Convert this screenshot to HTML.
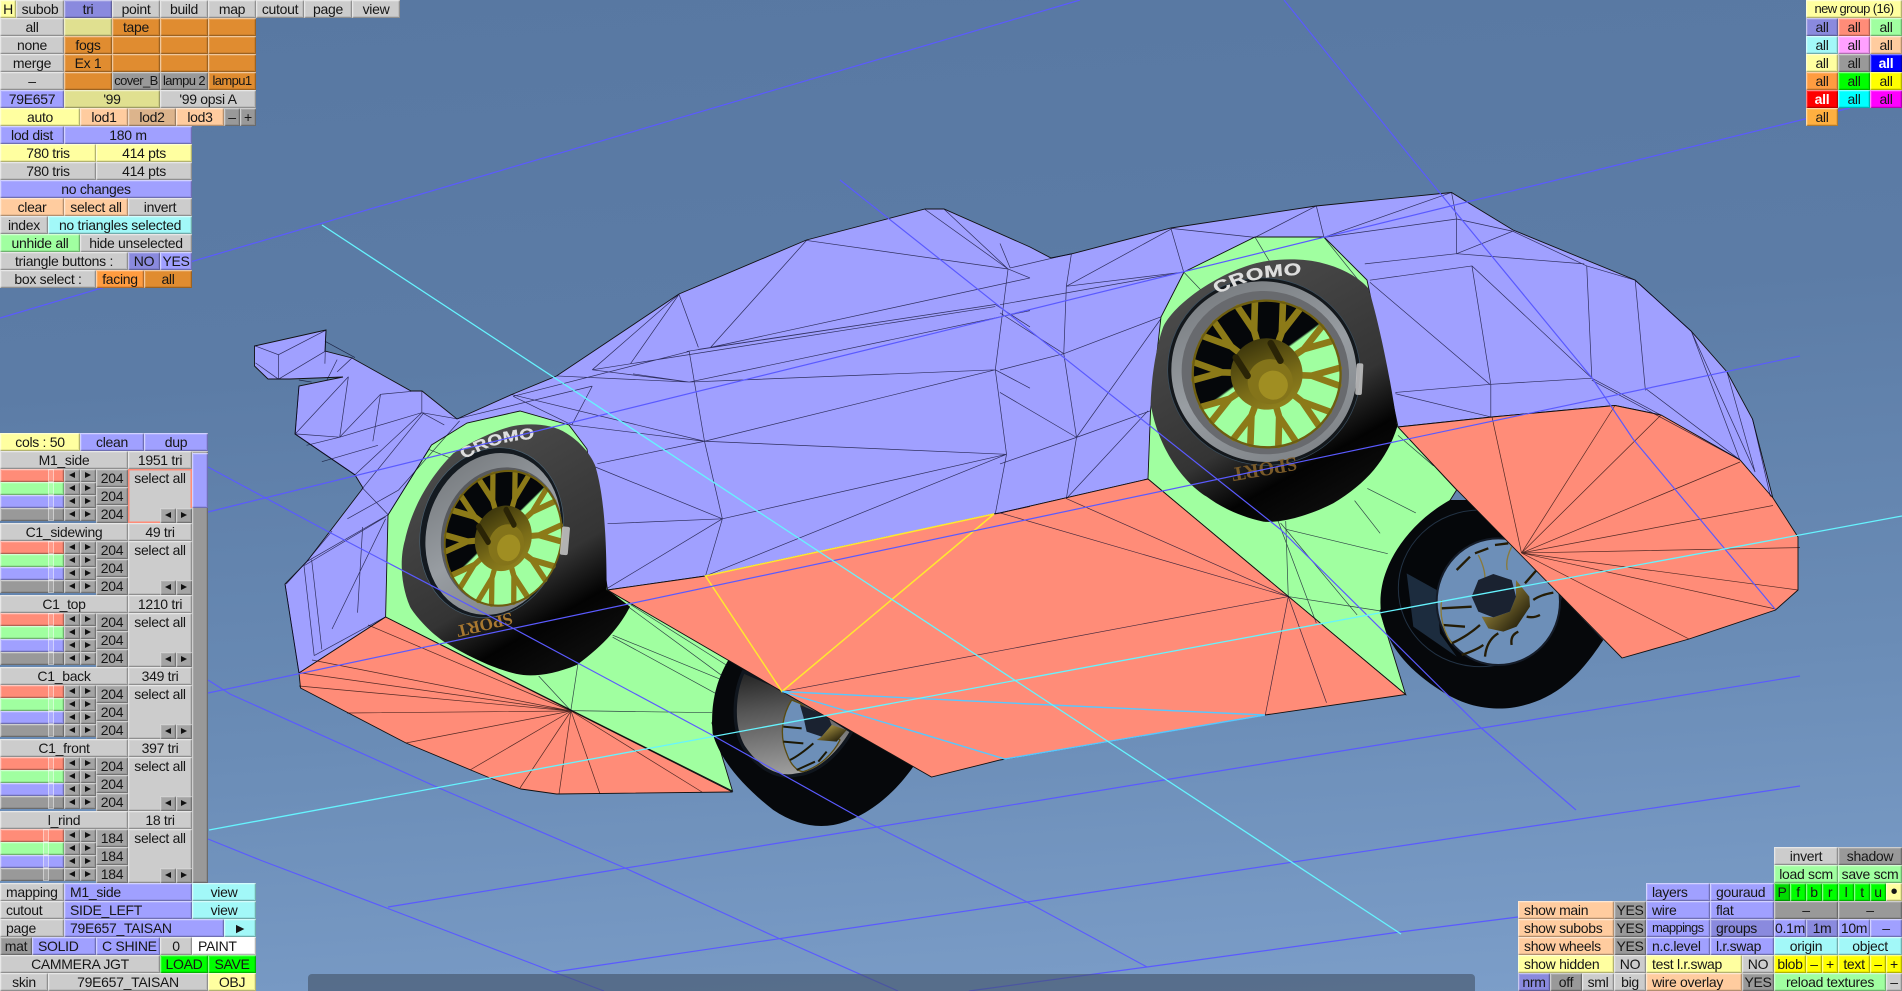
<!DOCTYPE html>
<html><head><meta charset="utf-8"><title>zmodeler</title>
<style>
html,body{margin:0;padding:0;width:1902px;height:991px;overflow:hidden;background:#6a8cb4}
#bg{position:absolute;left:0;top:0;width:1902px;height:991px;background:linear-gradient(176deg,#5878a2 0%,#5c7ca6 35%,#6a8cb6 68%,#7d9fca 100%)}
svg{position:absolute;left:0;top:0}
svg .w path,svg path.w{vector-effect:non-scaling-stroke}
#strip{position:absolute;left:308px;top:974px;width:1167px;height:17px;background:rgba(66,82,104,.62);border-radius:4px 4px 0 0}
#ui{position:absolute;left:0;top:0;width:1902px;height:991px;filter:blur(.3px);font:14px/18px "Liberation Sans",sans-serif;letter-spacing:-.3px;color:#161616}
#ui b,#ui i{position:absolute;display:block;box-sizing:border-box;height:18px;font-weight:normal;font-style:normal;text-align:center;white-space:nowrap;overflow:hidden;background:#ccc;box-shadow:inset 1px 1px 0 rgba(255,255,255,.45),inset -1px -1px 0 rgba(0,0,0,.24),inset 2px 2px 0 rgba(255,255,255,.14),inset -2px -2px 0 rgba(0,0,0,.08)}
#ui b.g{background:#ccc}#ui b.d{background:#999}#ui b.p{background:#a0a0ff}#ui b.P{background:#8a8ade}
#ui b.o{background:#e08c30}#ui b.O{background:#ff9c40}#ui b.y{background:#ffffa0}#ui b.Y{background:#e0e090}
#ui b.c{background:#ffcc9f}#ui b.C{background:#dcb48c}#ui b.n{background:#a2f8f8}#ui b.l{background:#a0ffa0}
#ui b.G{background:#00ff00}#ui b.GG{background:#00dc00}#ui b.YY{background:#ffff00}#ui b.W{background:#fff}
#ui b.B{background:#0000ff;color:#fff;font-weight:bold}#ui b.R{background:#ff0000;color:#fff;font-weight:bold}
#ui b.A{background:#00ffff}#ui b.M{background:#ff00ff}#ui b.K{background:#ffa0ff}#ui b.T{background:#ff8c78}#ui b.U{background:#ffb040}
#ui b.L{text-align:left;padding-left:6px}
#ui b.N{font-size:13px;letter-spacing:-.6px}
.bk{position:absolute;left:0;width:192px;height:72px}
.bk b.h1{left:0;top:0;width:128px}.bk b.h2{left:128px;top:0;width:64px}
#ui .bk i.s{left:0;width:64px;height:13px}
.bk i.s::after{content:"";position:absolute;left:48px;top:0;width:6px;height:13px;box-sizing:border-box;border:1px solid rgba(255,255,255,.45);background:rgba(255,255,255,.12)}
.bk.t i.s::after{left:43px}
#ui .bk i.s0{top:18px;background:#ff8c78}#ui .bk i.s1{top:31px;background:#a0ffa0}#ui .bk i.s2{top:44px;background:#a0a0ff}#ui .bk i.s3{top:57px;background:#999}
#ui .bk i.a{height:13px;width:16px;background:#a4a4a4}
.bk i.a::after{content:"";position:absolute;left:5px;top:3px;border:3.5px solid transparent;border-left:0;border-right:6px solid #111}
.bk i.e::after{border-right:0;border-left:6px solid #111}
.bk i.a.e{left:80px}.bk i.a.f{left:64px}
.bk i.r0{top:18px}.bk i.r1{top:31px}.bk i.r2{top:44px}.bk i.r3{top:57px}
#ui .bk b.n0,#ui .bk b.n1,#ui .bk b.n2{left:96px;width:32px;background:#a4a4a4}
.bk b.n0{top:18px}.bk b.n1{top:36px}.bk b.n2{top:54px}
#ui .bk b.sa{left:128px;top:18px;width:64px;height:54px;text-align:center}
#ui .bk i.x,#ui .bk i.z{top:57px;width:16px;height:15px;background:#a4a4a4}
.bk i.x{left:160px}.bk i.z{left:176px}
.bk i.x::after,.bk i.z::after{content:"";position:absolute;left:5px;top:4px;border:3.5px solid transparent}
.bk i.x::after{border-left:0;border-right:6px solid #111}.bk i.z::after{border-right:0;border-left:6px solid #111}
</style></head><body>
<div id="bg"></div>
<svg width="1902" height="991" viewBox="0 0 1902 991" xmlns="http://www.w3.org/2000/svg">
<defs>
<linearGradient id="tire" x1=".25" y1=".1" x2=".7" y2=".95"><stop offset="0" stop-color="#4a4a4a"/><stop offset=".6" stop-color="#343434"/><stop offset=".82" stop-color="#030303"/><stop offset="1" stop-color="#0c0c0c"/></linearGradient>
<linearGradient id="ring" x1=".1" y1=".1" x2=".9" y2=".9"><stop offset="0" stop-color="#787c80"/><stop offset=".5" stop-color="#989da2"/><stop offset="1" stop-color="#7e8286"/></linearGradient>
<linearGradient id="gap" x1=".15" y1=".25" x2=".75" y2=".65"><stop offset=".5" stop-color="#05070a"/><stop offset=".52" stop-color="#a0ffa0"/></linearGradient>
<linearGradient id="hub" x1="0" y1="0" x2="1" y2="1"><stop offset="0" stop-color="#2a2608"/><stop offset=".6" stop-color="#7a6c18"/><stop offset="1" stop-color="#9a8a20"/></linearGradient>
<linearGradient id="dish" x1=".3" y1="0" x2=".45" y2="1"><stop offset="0" stop-color="#262626"/><stop offset=".35" stop-color="#555"/><stop offset="1" stop-color="#a0a0a0"/></linearGradient>
<linearGradient id="au" x1="0" y1="0" x2="1" y2="1"><stop offset="0" stop-color="#c8b050"/><stop offset="1" stop-color="#0a0800"/></linearGradient>
<path id="c1" d="M0,0 Q90,-42 205,-8"/>
<path id="c2" d="M0,0 Q80,-36 185,-6"/>
<g id="rim">
<circle r="222" fill="url(#gap)"/>
<g fill="none" stroke="#8c7a18" stroke-width="20" stroke-linecap="round">
<path id="sp" d="M0,-60 L0,-135 L-26,-216 M0,-135 L26,-216"/>
<use href="#sp" transform="rotate(36)"/><use href="#sp" transform="rotate(72)"/><use href="#sp" transform="rotate(108)"/><use href="#sp" transform="rotate(144)"/><use href="#sp" transform="rotate(180)"/><use href="#sp" transform="rotate(216)"/><use href="#sp" transform="rotate(252)"/><use href="#sp" transform="rotate(288)"/><use href="#sp" transform="rotate(324)"/>
</g>
<circle r="222" fill="none" stroke="#6e5e10" stroke-width="7"/>
<circle r="108" fill="url(#hub)"/>
<circle cx="18" cy="18" r="68" fill="#84741a"/>
<circle cx="30" cy="25" r="44" fill="#a08e22"/>
<path d="M-20,-92 L25,-52 M-104,-15 L-52,25" stroke="#2a2406" stroke-width="20" stroke-linecap="round"/>
</g>
</defs>

<!-- body fills -->
<polygon fill="#a0a0ff" stroke="#111" stroke-width=".9" points="299,673 285,584 306.5,562 363,488 355,475 295,434 299,386 343,377 290,379 268,379 254.5,366 254.5,346 326,330 325,351 352,358 411,391 422,391 457,419 513,394 556.5,376 679,294 806.5,240 925,209 944,209 1030,247 1051,258 1071,254 1171,228 1316,206 1451.5,192.5 1513,230 1635,280 1691,331 1727,372 1752.5,419 1773,498.6 1740,460 1661,415 1615,405.5 1492,417 1398,427 1148,479 1000,513 994,514 705.5,576 607.5,590 385.6,617"/>
<polygon fill="#a0ffa0" stroke="#111" stroke-width=".9" points="385.6,617 388,515 431.5,445 467,423 520,411 569,425 587,449 607.5,590 732.5,662 712,723 732.5,791"/>
<polygon fill="#ff8c78" stroke="#111" stroke-width=".9" points="385.6,617 299,673 300.5,688 406,743 490,778 521,789 556.5,794 732.5,792"/>
<polygon fill="#a0ffa0" stroke="#111" stroke-width=".9" points="1148,479 1150.5,411 1161,317 1184,272 1255,237 1324,237 1367,280 1398,427 1456.6,490 1380,611 1405.6,694.5"/>

<!-- lower wheels -->
<g transform="translate(700,660) scale(.3333)">
<path d="M85,0 C50,60 30,130 38,220 C60,300 130,380 220,450 C280,490 340,505 400,495 C480,480 570,420 640,320 L300,100 L100,0Z" fill="#06080b"/>
<path d="M130,35 C100,100 95,200 130,260 C170,320 230,360 290,345 C350,340 410,290 455,215 L280,100Z" fill="url(#dish)" stroke="#10161e" stroke-width="10"/>
<path d="M275,120 C250,160 235,220 260,280 C270,310 290,335 310,335 C360,320 400,280 420,240 L300,130Z" fill="#6d8fb8" stroke="#5a4c12" stroke-width="4"/>
<path d="M300,135 L385,170 L395,195 L365,230 L320,215 L310,170Z" fill="#1a2230"/>
<path d="M395,195 L440,210 L410,245 L350,240 L365,230Z" fill="url(#au)"/>
<path d="M250,200 L305,205 M250,245 L310,250 M270,300 Q300,285 340,250 M290,330 L345,305 M355,305 L380,275" stroke="#1c1804" stroke-width="6" fill="none"/>
</g>
<g transform="translate(1370,500) scale(.3333)">
<path d="M240,0 L295,0 L700,420 C680,450 640,510 590,550 C520,610 430,630 370,625 C300,620 250,600 180,550 C110,500 60,440 40,370 C25,320 30,260 50,210 C80,130 150,50 240,0Z" fill="#06080b"/>
<ellipse cx="330" cy="265" rx="245" ry="235" fill="#05070a" stroke="#223244" stroke-width="3"/>
<path d="M110,220 L200,270 L210,400 L260,470 L130,380Z" fill="#1c2c3e"/>
<ellipse cx="385" cy="305" rx="185" ry="190" fill="#6d8fb8" stroke="#151c28" stroke-width="6"/>
<path d="M215,325 L305,320 M220,375 L285,380 M245,430 Q290,410 330,375 M275,465 Q320,450 340,435 M345,470 Q350,420 385,400 M425,435 Q420,405 445,395 M470,350 Q490,355 510,345 M490,300 Q510,285 550,278 M465,250 L500,210 M260,210 L300,170 M315,160 L355,145 M375,135 L415,130" stroke="#241c06" stroke-width="7" fill="none"/>
<path d="M215,300 Q205,370 245,430 M325,165 Q345,205 345,235 M425,140 Q405,180 412,210" stroke="#8a7a3a" stroke-width="4" fill="none"/>
<path d="M438,240 L478,290 L480,320 L440,380 L400,395 L355,385 L335,350 L370,352 L420,335 L438,290Z" fill="url(#au)"/>
<path d="M370,222 L425,240 L438,290 L420,335 L370,352 L325,335 L305,290 L325,240Z" fill="#1a2230"/>
</g>

<!-- big orange panels -->
<polygon fill="#ff8c78" stroke="#111" stroke-width=".9" points="607.5,590 705.5,576 994,514 1000,513 1148,479 1405.6,694.5 1265,715 1000,760 931.5,777 782,691.5"/>
<polygon fill="#ff8c78" stroke="#111" stroke-width=".9" points="1398,427 1492,417 1615,405.5 1661,415 1740,460 1773,498 1798,537 1798,590 1775.5,610 1689,639 1622,658 1457,490"/>

<!-- fans -->
<path fill="none" stroke="#1a0808" stroke-width=".7" stroke-opacity=".75" d="M571,711 L301,673 M571,711 L312,660 M571,711 L299,686 M571,711 L347,713 M571,711 L406,743 M571,711 L470,770 M571,711 L520,788 M571,711 L559,794 M571,711 L600,794 M571,711 L702,792 M571,711 L368,625
M1521.5,553 L1615,405.5 M1521.5,553 L1661,415 M1521.5,553 L1740,462 M1521.5,553 L1773,505.5 M1521.5,553 L1800,547.6 M1521.5,553 L1798,590 M1521.5,553 L1775.5,609 M1521.5,553 L1689,639 M1521.5,553 L1492,417"/>

<!-- wire z10 -->
<g class="w" transform="translate(230,180) scale(.5102,.4082)" fill="none" stroke="#0a0a28" stroke-width=".7" stroke-opacity=".75">
<path d="M48,406 L95,428 L188,368 M95,428 L95,488 M50,448 L95,488 M95,488 L186,420 M188,368 L186,450 M240,435 L210,470 M186,395 L245,435 M135,490 L160,495 M210,440 L190,490"/>
<path d="M135,505 L128,622 L215,630 L295,525 L355,518 M232,482 L215,630 M128,622 L232,482 M215,630 L376,570 L376,518 M376,570 L445,585 M128,622 L245,722 M215,630 L150,650 M290,650 L180,690 M376,570 L420,600 M376,570 L245,722 M295,525 L280,640 M380,570 L260,755"/>
<path d="M108,990 L135,1208 M145,945 L165,1165 M160,930 L180,1150 M305,1070 L165,1165 M310,820 L150,935 M305,825 L145,945 M305,830 L200,1100 M260,755 L310,820 M390,660 L310,820 M260,850 L250,1060 M110,990 L150,935 M200,860 L150,935 M330,760 L230,830 M450,590 L330,760 M390,660 L450,690"/>
<path d="M880,280 L918,410 M880,280 L785,450 M1130,148 L942,410 M1130,148 L1525,218 M1362,72 L1525,218 M1400,72 L1525,218 M1525,218 L1568,240 M942,410 L1568,240 M918,415 L1500,305 M710,465 L1500,310 M895,420 L1500,305 M710,465 L900,495 M790,475 L900,495 M900,495 L1500,465 M900,495 L1568,320 M900,420 L930,640 M930,640 L965,830 M965,830 L932,970 M965,830 L740,1000 M965,830 L1522,672 M930,640 L1522,672 M930,640 L1500,465 M670,600 L930,640 M710,505 L670,600 M555,530 L670,600 M550,525 L930,640 M720,695 L930,640 M710,700 L965,830 M740,842 L965,830 M1500,465 L1522,672 M1522,672 L1500,818 M1525,218 L1500,465 M1522,672 L932,970 M1500,305 L1568,360 M1500,465 L1568,510 M640,480 L900,495 M555,530 L900,420 M880,280 L710,465 M445,585 L710,505 M1500,818 L1568,800"/>
<path d="M668,1300 L605,1215 M668,1300 L682,1185 M668,1300 L945,1305 M750,1115 L965,1225 M750,1120 L955,1260 M785,1040 L975,1190 M780,1045 L965,1215"/>
</g>
<!-- wire z11 -->
<g class="w" transform="translate(1000,170) scale(.5102,.4082)" fill="none" stroke="#0a0a28" stroke-width=".7" stroke-opacity=".75">
<path d="M335,143 L360,250 M335,143 L500,165 M500,165 L620,88 M620,88 L635,165 M885,55 L635,165 M885,55 L895,120 L895,205 M635,165 L895,120 M715,230 L895,205 M895,205 L1145,230 M925,235 L1160,510 M925,235 L962,525 M725,270 L925,235 M725,275 L960,525 M1150,235 L1160,510 M1150,235 L1245,270 M1245,270 L1265,540 M1245,270 L1355,395 M1355,395 L1450,710 M1160,510 L1295,600 M962,525 L1160,510 M962,525 L962,605 M775,545 L962,525 M775,548 L962,605 M1160,515 L1450,710 M1265,535 L1450,710 M1425,495 L1480,740 M1475,610 L1510,800 M1355,395 L1480,740 M895,120 L1005,150 L895,205 M1005,150 L1150,235"/>
<path d="M140,205 L130,285 M130,285 L360,250 M130,285 L125,450 M125,450 L150,655 M150,655 L130,805 M0,330 L360,250 M140,205 L20,240 M0,180 L20,240 M125,450 L315,360 M125,450 L0,350 M125,450 L0,490 M150,655 L315,365 M150,655 L0,545 M150,655 L295,590 M0,720 L150,655 M130,805 L290,590 M130,285 L335,145 M500,165 L560,290 M635,165 L725,305 M360,250 L425,335"/>
<path d="M0,840 L565,1045 M130,805 L565,1045 M-427,1278 L565,1045 M565,1045 L520,1335 M565,1045 L640,1305 M560,860 L565,1045 M560,880 L760,940 M720,780 L815,840 M695,810 L745,890 M550,865 L700,1090 M565,1045 L745,1080 M780,650 L850,725 M545,860 L620,1110"/>
</g>
<!-- selected edges -->
<path fill="none" stroke="#ffe830" stroke-width="1.5" d="M705.5,576 L994,514 L782,691.5 Z"/>
<path fill="none" stroke="#58c8ff" stroke-width="1.4" d="M782,691.5 L1030,704 L1265,715 M782,691.5 L1005,759 L1265,715"/>

<!-- upper rear wheel -->
<g transform="translate(380,410) scale(.3333)">
<path d="M420,45 C470,40 520,45 560,70 C600,95 630,130 645,165 C665,230 680,330 680,540 C700,550 730,575 750,590 C725,640 680,700 590,765 C530,790 470,800 430,795 C380,790 290,755 200,700 C150,670 100,610 90,590 C60,520 60,440 75,390 C90,320 130,220 220,130 C290,85 370,50 420,45Z" fill="url(#tire)"/>
<ellipse cx="335" cy="368" rx="212" ry="258" transform="rotate(16 335 368)" fill="#141a20" stroke="#4a6070" stroke-width="2"/>
<ellipse cx="340" cy="372" rx="200" ry="246" transform="rotate(16 340 372)" fill="url(#ring)"/>
<ellipse cx="365" cy="380" rx="180" ry="210" transform="rotate(16 365 380)" fill="#585a5e"/>
<g transform="translate(370,385) rotate(16) scale(.78,.92)"><use href="#rim"/></g>
<rect x="543" y="350" width="24" height="85" rx="6" fill="#c8c8c8" transform="rotate(5 555 390)" opacity=".85"/>
<g transform="translate(255,148) rotate(-14) scale(1.25,1)"><text font-family="Liberation Sans" font-weight="bold" font-size="46" fill="#dedede" stroke="#dedede" stroke-width="1"><textPath href="#c2">CROMO</textPath></text></g>
<text text-anchor="middle" transform="translate(310,628) rotate(166)" font-family="Liberation Serif" font-weight="bold" font-size="52" fill="#a87830">SPORT</text>
</g>
<!-- upper front wheel -->
<g transform="translate(1120,230) scale(.3333)">
<path d="M430,95 C480,85 560,85 610,100 C670,115 720,145 745,175 C770,250 810,430 832,590 C800,690 740,760 640,820 C560,860 480,880 430,875 C360,860 300,830 260,800 C180,750 110,640 92,520 C95,420 115,330 130,290 C170,210 320,115 430,95Z" fill="url(#tire)"/>
<ellipse cx="432" cy="425" rx="290" ry="280" transform="rotate(20 432 425)" fill="#14181c" stroke="#3c5060" stroke-width="2"/>
<ellipse cx="432" cy="425" rx="279" ry="270" transform="rotate(20 432 425)" fill="url(#ring)"/>
<ellipse cx="436" cy="428" rx="252" ry="244" transform="rotate(20 436 428)" fill="#686a6e"/>
<g transform="translate(440,432) rotate(20) scale(1,.99)"><use href="#rim"/></g>
<rect x="708" y="400" width="20" height="95" rx="6" fill="#c8c8c8" transform="rotate(3 718 445)" opacity=".85"/>
<g transform="translate(295,192) rotate(-10) scale(1.35,1)"><text font-family="Liberation Sans" font-weight="bold" font-size="50" fill="#dedede" stroke="#dedede" stroke-width="1"><textPath href="#c1">CROMO</textPath></text></g>
<text text-anchor="middle" transform="translate(430,698) rotate(170)" font-family="Liberation Serif" font-weight="bold" font-size="60" fill="#7a5a28">SPORT</text>
</g>

<!-- grid -->
<g fill="none" stroke="#5a5aff" stroke-width="1.2">
<path d="M0,318 L1080,0"/>
<path d="M208,512 L1597,170 L1850,108"/>
<path d="M208,693 L1030,519 L1800,356"/>
<path d="M388,907 L1164,780 L1800,676"/>
<path d="M554,972 L1027,902 L1560,822 L1800,786"/>
<path d="M969,991 L1147,967 L1400,932 L1518,917"/>
<path d="M840,180 L1280,529 L1480,727 L1576,810"/>
<path d="M1284,0 L1421,170 L1592,378 L1633,439 L1775,609"/>
<path d="M208,467 L327,531 L510.6,627 L712,735 L869,823 L1027,902 L1147,967"/>
<path d="M208,680 L230,694 L439,788 L625,868 L778,938 L898,991"/>
<path d="M208,839 L260,860 L384,907 L554,972 L604,991"/>
</g>
<g fill="none" stroke="#66f4ff" stroke-width="1.3">
<path d="M322,225 L1401,934"/>
<path d="M209,830 L1902,516"/>
</g>
</svg>
<div id="strip"></div>

<div id="ui">
<!-- top bar -->
<b class="y" style="left:0;top:0;width:16px">H</b><b class="g" style="left:16px;top:0;width:48px">subob</b><b class="P" style="left:64px;top:0;width:48px">tri</b><b class="g" style="left:112px;top:0;width:48px">point</b><b class="g" style="left:160px;top:0;width:48px">build</b><b class="g" style="left:208px;top:0;width:48px">map</b><b class="g" style="left:256px;top:0;width:48px">cutout</b><b class="g" style="left:304px;top:0;width:48px">page</b><b class="g" style="left:352px;top:0;width:48px">view</b>
<b class="g" style="left:0;top:18px;width:64px">all</b><b class="Y" style="left:64px;top:18px;width:48px"></b><b class="o" style="left:112px;top:18px;width:48px">tape</b><b class="o" style="left:160px;top:18px;width:48px"></b><b class="o" style="left:208px;top:18px;width:48px"></b>
<b class="g" style="left:0;top:36px;width:64px">none</b><b class="o" style="left:64px;top:36px;width:48px">fogs</b><b class="o" style="left:112px;top:36px;width:48px"></b><b class="o" style="left:160px;top:36px;width:48px"></b><b class="o" style="left:208px;top:36px;width:48px"></b>
<b class="g" style="left:0;top:54px;width:64px">merge</b><b class="o" style="left:64px;top:54px;width:48px">Ex 1</b><b class="o" style="left:112px;top:54px;width:48px"></b><b class="o" style="left:160px;top:54px;width:48px"></b><b class="o" style="left:208px;top:54px;width:48px"></b>
<b class="g" style="left:0;top:72px;width:64px">–</b><b class="o" style="left:64px;top:72px;width:48px"></b><b class="d N" style="left:112px;top:72px;width:48px">cover_B</b><b class="d N" style="left:160px;top:72px;width:48px">lampu 2</b><b class="o N" style="left:208px;top:72px;width:48px">lampu1</b>
<b class="p" style="left:0;top:90px;width:64px">79E657</b><b class="Y" style="left:64px;top:90px;width:96px">'99</b><b class="g" style="left:160px;top:90px;width:96px">'99 opsi A</b>
<b class="y" style="left:0;top:108px;width:80px">auto</b><b class="c" style="left:80px;top:108px;width:48px">lod1</b><b class="C" style="left:128px;top:108px;width:48px">lod2</b><b class="c" style="left:176px;top:108px;width:48px">lod3</b><b class="d" style="left:224px;top:108px;width:16px">–</b><b class="d" style="left:240px;top:108px;width:16px">+</b>
<b class="p" style="left:0;top:126px;width:64px">lod dist</b><b class="p" style="left:64px;top:126px;width:128px">180 m</b>
<b class="y" style="left:0;top:144px;width:96px">780 tris</b><b class="y" style="left:96px;top:144px;width:96px">414 pts</b>
<b class="g" style="left:0;top:162px;width:96px">780 tris</b><b class="g" style="left:96px;top:162px;width:96px">414 pts</b>
<b class="p" style="left:0;top:180px;width:192px">no changes</b>
<b class="c" style="left:0;top:198px;width:64px">clear</b><b class="c" style="left:64px;top:198px;width:64px">select all</b><b class="g" style="left:128px;top:198px;width:64px">invert</b>
<b class="g" style="left:0;top:216px;width:48px">index</b><b class="n" style="left:48px;top:216px;width:144px">no triangles selected</b>
<b class="l" style="left:0;top:234px;width:80px">unhide all</b><b class="g" style="left:80px;top:234px;width:112px">hide unselected</b>
<b class="g" style="left:0;top:252px;width:128px">triangle buttons :</b><b class="P" style="left:128px;top:252px;width:32px">NO</b><b class="p" style="left:160px;top:252px;width:32px">YES</b>
<b class="g" style="left:0;top:270px;width:96px">box select :</b><b class="O" style="left:96px;top:270px;width:48px">facing</b><b class="o" style="left:144px;top:270px;width:48px">all</b>

<!-- cols -->
<b class="y" style="left:0;top:433px;width:80px">cols : 50</b><b class="p" style="left:80px;top:433px;width:64px">clean</b><b class="p" style="left:144px;top:433px;width:64px">dup</b>
<b class="d" style="left:192px;top:451px;width:16px;height:432px"></b>
<b class="p" style="left:192px;top:453px;width:16px;height:55px"></b>

<div class="bk" style="top:451px"><b class="g h1">M1_side</b><b class="g h2">1951 tri</b><i class="s s0"></i><i class="s s1"></i><i class="s s2"></i><i class="s s3"></i><i class="a f r0"></i><i class="a e r0"></i><i class="a f r1"></i><i class="a e r1"></i><i class="a f r2"></i><i class="a e r2"></i><i class="a f r3"></i><i class="a e r3"></i><b class="n0">204</b><b class="n1">204</b><b class="n2">204</b><b class="g sa" style="box-shadow:inset 0 0 0 1.5px #ff8c78">select all</b><i class="x"></i><i class="z"></i></div>
<div class="bk" style="top:523px"><b class="g h1">C1_sidewing</b><b class="g h2">49 tri</b><i class="s s0"></i><i class="s s1"></i><i class="s s2"></i><i class="s s3"></i><i class="a f r0"></i><i class="a e r0"></i><i class="a f r1"></i><i class="a e r1"></i><i class="a f r2"></i><i class="a e r2"></i><i class="a f r3"></i><i class="a e r3"></i><b class="n0">204</b><b class="n1">204</b><b class="n2">204</b><b class="g sa">select all</b><i class="x"></i><i class="z"></i></div>
<div class="bk" style="top:595px"><b class="g h1">C1_top</b><b class="g h2">1210 tri</b><i class="s s0"></i><i class="s s1"></i><i class="s s2"></i><i class="s s3"></i><i class="a f r0"></i><i class="a e r0"></i><i class="a f r1"></i><i class="a e r1"></i><i class="a f r2"></i><i class="a e r2"></i><i class="a f r3"></i><i class="a e r3"></i><b class="n0">204</b><b class="n1">204</b><b class="n2">204</b><b class="g sa">select all</b><i class="x"></i><i class="z"></i></div>
<div class="bk" style="top:667px"><b class="g h1">C1_back</b><b class="g h2">349 tri</b><i class="s s0"></i><i class="s s1"></i><i class="s s2"></i><i class="s s3"></i><i class="a f r0"></i><i class="a e r0"></i><i class="a f r1"></i><i class="a e r1"></i><i class="a f r2"></i><i class="a e r2"></i><i class="a f r3"></i><i class="a e r3"></i><b class="n0">204</b><b class="n1">204</b><b class="n2">204</b><b class="g sa">select all</b><i class="x"></i><i class="z"></i></div>
<div class="bk" style="top:739px"><b class="g h1">C1_front</b><b class="g h2">397 tri</b><i class="s s0"></i><i class="s s1"></i><i class="s s2"></i><i class="s s3"></i><i class="a f r0"></i><i class="a e r0"></i><i class="a f r1"></i><i class="a e r1"></i><i class="a f r2"></i><i class="a e r2"></i><i class="a f r3"></i><i class="a e r3"></i><b class="n0">204</b><b class="n1">204</b><b class="n2">204</b><b class="g sa">select all</b><i class="x"></i><i class="z"></i></div>
<div class="bk t" style="top:811px"><b class="g h1">l_rind</b><b class="g h2">18 tri</b><i class="s s0"></i><i class="s s1"></i><i class="s s2"></i><i class="s s3"></i><i class="a f r0"></i><i class="a e r0"></i><i class="a f r1"></i><i class="a e r1"></i><i class="a f r2"></i><i class="a e r2"></i><i class="a f r3"></i><i class="a e r3"></i><b class="n0">184</b><b class="n1">184</b><b class="n2">184</b><b class="g sa">select all</b><i class="x"></i><i class="z"></i></div>

<!-- bottom left -->
<b class="g L" style="left:0;top:883px;width:64px">mapping</b><b class="p L" style="left:64px;top:883px;width:128px">M1_side</b><b class="n" style="left:192px;top:883px;width:64px">view</b>
<b class="g L" style="left:0;top:901px;width:64px">cutout</b><b class="p L" style="left:64px;top:901px;width:128px">SIDE_LEFT</b><b class="n" style="left:192px;top:901px;width:64px">view</b>
<b class="g L" style="left:0;top:919px;width:64px">page</b><b class="p L" style="left:64px;top:919px;width:160px">79E657_TAISAN</b><b class="n" style="left:224px;top:919px;width:32px">►</b>
<b class="d" style="left:0;top:937px;width:32px">mat</b><b class="p L" style="left:32px;top:937px;width:64px">SOLID</b><b class="p L" style="left:96px;top:937px;width:64px">C SHINE</b><b class="g" style="left:160px;top:937px;width:32px">0</b><b class="W L" style="left:192px;top:937px;width:64px">PAINT</b>
<b class="g" style="left:0;top:955px;width:160px">CAMMERA JGT</b><b class="G" style="left:160px;top:955px;width:48px">LOAD</b><b class="G" style="left:208px;top:955px;width:48px">SAVE</b>
<b class="g" style="left:0;top:973px;width:48px">skin</b><b class="g" style="left:48px;top:973px;width:160px">79E657_TAISAN</b><b class="y" style="left:208px;top:973px;width:48px">OBJ</b>

<!-- top right -->
<b class="y N" style="left:1806px;top:0;width:96px">new group (16)</b>
<b class="P" style="left:1806px;top:18px;width:32px">all</b><b class="T" style="left:1838px;top:18px;width:32px">all</b><b class="l" style="left:1870px;top:18px;width:32px">all</b>
<b class="n" style="left:1806px;top:36px;width:32px">all</b><b class="K" style="left:1838px;top:36px;width:32px">all</b><b class="c" style="left:1870px;top:36px;width:32px">all</b>
<b class="y" style="left:1806px;top:54px;width:32px">all</b><b class="d" style="left:1838px;top:54px;width:32px">all</b><b class="B" style="left:1870px;top:54px;width:32px">all</b>
<b class="O" style="left:1806px;top:72px;width:32px">all</b><b class="G" style="left:1838px;top:72px;width:32px">all</b><b class="YY" style="left:1870px;top:72px;width:32px">all</b>
<b class="R" style="left:1806px;top:90px;width:32px">all</b><b class="A" style="left:1838px;top:90px;width:32px">all</b><b class="M" style="left:1870px;top:90px;width:32px">all</b>
<b class="U" style="left:1806px;top:108px;width:32px">all</b>

<!-- bottom right -->
<b class="g" style="left:1774px;top:847px;width:64px">invert</b><b class="d" style="left:1838px;top:847px;width:64px">shadow</b>
<b class="l" style="left:1774px;top:865px;width:64px">load scm</b><b class="l" style="left:1838px;top:865px;width:64px">save scm</b>
<b class="p L" style="left:1646px;top:883px;width:64px">layers</b><b class="p L" style="left:1710px;top:883px;width:64px">gouraud</b>
<b class="GG" style="left:1774px;top:883px;width:16px">P</b><b class="G" style="left:1790px;top:883px;width:16px">f</b><b class="G" style="left:1806px;top:883px;width:16px">b</b><b class="G" style="left:1822px;top:883px;width:16px">r</b><b class="G" style="left:1838px;top:883px;width:16px">l</b><b class="G" style="left:1854px;top:883px;width:16px">t</b><b class="G" style="left:1870px;top:883px;width:16px">u</b><b class="y" style="left:1886px;top:883px;width:16px;font-size:20px">•</b>
<b class="c L" style="left:1518px;top:901px;width:96px">show main</b><b class="d" style="left:1614px;top:901px;width:32px">YES</b><b class="p L" style="left:1646px;top:901px;width:64px">wire</b><b class="p L" style="left:1710px;top:901px;width:64px">flat</b><b class="d" style="left:1774px;top:901px;width:64px">–</b><b class="d" style="left:1838px;top:901px;width:64px">–</b>
<b class="c L" style="left:1518px;top:919px;width:96px">show subobs</b><b class="d" style="left:1614px;top:919px;width:32px">YES</b><b class="p L N" style="left:1646px;top:919px;width:64px">mappings</b><b class="P L" style="left:1710px;top:919px;width:64px">groups</b><b class="p" style="left:1774px;top:919px;width:32px">0.1m</b><b class="P" style="left:1806px;top:919px;width:32px">1m</b><b class="p" style="left:1838px;top:919px;width:32px">10m</b><b class="p" style="left:1870px;top:919px;width:32px">–</b>
<b class="c L" style="left:1518px;top:937px;width:96px">show wheels</b><b class="d" style="left:1614px;top:937px;width:32px">YES</b><b class="p L" style="left:1646px;top:937px;width:64px">n.c.level</b><b class="p L" style="left:1710px;top:937px;width:64px">l.r.swap</b><b class="n" style="left:1774px;top:937px;width:64px">origin</b><b class="n" style="left:1838px;top:937px;width:64px">object</b>
<b class="y L" style="left:1518px;top:955px;width:96px">show hidden</b><b class="g" style="left:1614px;top:955px;width:32px">NO</b><b class="y L" style="left:1646px;top:955px;width:96px">test l.r.swap</b><b class="g" style="left:1742px;top:955px;width:32px">NO</b><b class="YY" style="left:1774px;top:955px;width:32px">blob</b><b class="YY" style="left:1806px;top:955px;width:16px">–</b><b class="YY" style="left:1822px;top:955px;width:16px">+</b><b class="YY" style="left:1838px;top:955px;width:32px">text</b><b class="YY" style="left:1870px;top:955px;width:16px">–</b><b class="YY" style="left:1886px;top:955px;width:16px">+</b>
<b class="P" style="left:1518px;top:973px;width:32px">nrm</b><b class="d" style="left:1550px;top:973px;width:32px">off</b><b class="g" style="left:1582px;top:973px;width:32px">sml</b><b class="g" style="left:1614px;top:973px;width:32px">big</b><b class="c L" style="left:1646px;top:973px;width:96px">wire overlay</b><b class="d" style="left:1742px;top:973px;width:32px">YES</b><b class="l" style="left:1774px;top:973px;width:112px">reload textures</b><b class="g" style="left:1886px;top:973px;width:16px">–</b>
</div>
</body></html>
